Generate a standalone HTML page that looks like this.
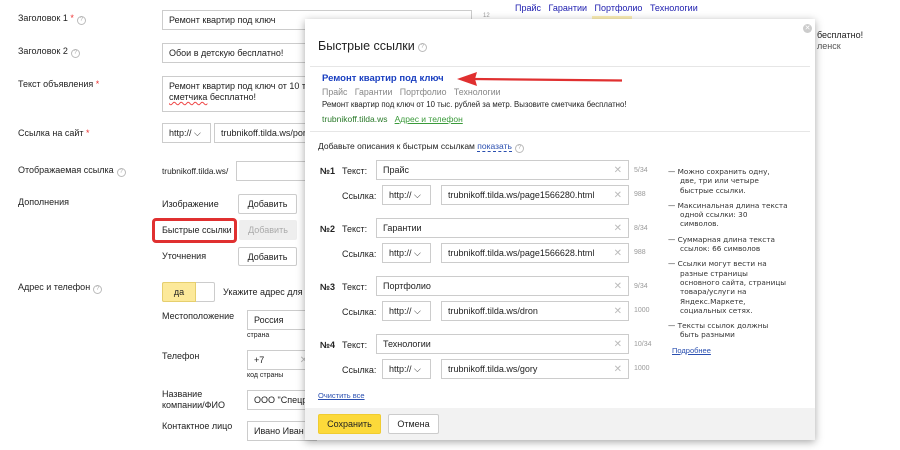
<!DOCTYPE html>
<html><head><meta charset="utf-8"><style>
*{box-sizing:border-box;margin:0;padding:0}
body{width:900px;height:450px;background:#fff;position:relative;overflow:hidden;font-family:"Liberation Sans",Arial,sans-serif;font-size:9px;color:#222}
.a{position:absolute;white-space:nowrap}
.inp{position:absolute;border:1px solid #ccc;background:#fff;font-size:9px;padding:0 0 0 6px;display:flex;align-items:center;white-space:nowrap;overflow:hidden}
.btn{position:absolute;border:1px solid #ccc;background:#fff;border-radius:2px;font-size:9px;display:flex;align-items:center;justify-content:center}
.q{display:inline-block;width:9px;height:9px;border:1px solid #bbb;border-radius:50%;font-size:6px;color:#aaa;text-align:center;line-height:7px;vertical-align:0px;margin-left:3px}
.req{color:#e33}
.x{position:absolute;right:6px;color:#bbb;font-size:10px}
.cnt{position:absolute;font-size:7px;color:#999}
.notes{position:absolute;left:668px;font-family:"DejaVu Sans",sans-serif;font-size:7.3px;line-height:9.3px;color:#333;white-space:nowrap}
.notes div{padding-left:12px;text-indent:-12px;margin-bottom:6px}
</style></head><body>
<div class="a" style="left:18px;top:13px">Заголовок 1 <span class="req">*</span><span class="q">?</span></div>
<div class="inp" style="left:162px;top:10px;width:310px;height:20px">Ремонт квартир под ключ<span class="x" style="right:10px">⌵</span></div>
<div class="a" style="left:483px;top:13px;font-size:6px;color:#999">12</div>
<div class="a" style="left:18px;top:46px">Заголовок 2<span class="q">?</span></div>
<div class="inp" style="left:162px;top:43px;width:150px;height:20px">Обои в детскую бесплатно!</div>
<div class="a" style="left:18px;top:79px">Текст объявления <span class="req">*</span></div>
<div class="inp" style="left:162px;top:76px;width:150px;height:36px;align-items:flex-start;padding-top:4px;line-height:11px;display:block">Ремонт квартир под ключ от 10 тыс.<br><span style="text-decoration:underline wavy #e44">сметчика</span> бесплатно!</div>
<div class="a" style="left:18px;top:128px">Ссылка на сайт <span class="req">*</span></div>
<div class="inp" style="left:162px;top:123px;width:49px;height:20px">http:// ⌵</div>
<div class="inp" style="left:214px;top:123px;width:100px;height:20px">trubnikoff.tilda.ws/portf</div>
<div class="a" style="left:18px;top:165px">Отображаемая ссылка<span class="q">?</span></div>
<div class="a" style="left:162px;top:166px;font-size:8.3px">trubnikoff.tilda.ws/</div>
<div class="inp" style="left:236px;top:161px;width:80px;height:20px"></div>
<div class="a" style="left:18px;top:197px">Дополнения</div>
<div class="a" style="left:162px;top:199px">Изображение</div>
<div class="btn" style="left:238px;top:194px;width:59px;height:20px">Добавить</div>
<div class="a" style="left:152px;top:218px;width:85px;height:25px;border:3px solid #e03030;border-radius:4px"></div>
<div class="a" style="left:162px;top:225px">Быстрые ссылки</div>
<div class="btn" style="left:239px;top:220px;width:58px;height:20px;background:#eee;border-color:#eee;color:#aaa">Добавить</div>
<div class="a" style="left:162px;top:251px">Уточнения</div>
<div class="btn" style="left:238px;top:247px;width:59px;height:19px">Добавить</div>
<div class="a" style="left:18px;top:282px">Адрес и телефон<span class="q">?</span></div>
<div class="a" style="left:162px;top:282px;width:53px;height:20px;border:1px solid #ccc;border-radius:2px;background:#fff"></div>
<div class="a" style="left:162px;top:282px;width:34px;height:20px;background:#fce99a;border:1px solid #e6cf6e;border-radius:2px 0 0 2px;text-align:center;line-height:18px">да</div>
<div class="a" style="left:223px;top:287px">Укажите адрес для</div>
<div class="a" style="left:162px;top:311px">Местоположение</div>
<div class="inp" style="left:247px;top:310px;width:70px;height:20px">Россия</div>
<div class="a" style="left:247px;top:332px;font-size:7px">страна</div>
<div class="a" style="left:162px;top:351px">Телефон</div>
<div class="inp" style="left:247px;top:350px;width:70px;height:20px">+7<span class="x" style="right:8px">✕</span></div>
<div class="a" style="left:247px;top:372px;font-size:7px">код страны</div>
<div class="a" style="left:162px;top:389px;line-height:11px">Название<br>компании/ФИО</div>
<div class="inp" style="left:247px;top:390px;width:70px;height:20px">ООО "Спецр</div>
<div class="a" style="left:162px;top:421px">Контактное лицо</div>
<div class="inp" style="left:247px;top:421px;width:70px;height:20px">Ивано Иван</div>
<div class="a" style="left:515px;top:3px;color:#2020b0;font-size:9px">Прайс &nbsp; Гарантии &nbsp; Портфолио &nbsp; Технологии</div>
<div class="a" style="left:592px;top:16px;width:40px;height:4px;background:#fbeeb5"></div>
<div class="a" style="left:817px;top:30px">бесплатно!</div>
<div class="a" style="left:817px;top:41px;color:#555">ленск</div>

<div class="a" style="left:305px;top:19px;width:510px;height:421px;background:#fff;box-shadow:0 2px 8px rgba(0,0,0,.35)">
  <div class="a" style="left:13px;top:20px;font-size:12.5px;color:#222">Быстрые ссылки<span class="q" style="vertical-align:2px">?</span></div>
  <div class="a" style="left:498px;top:5px;width:9px;height:9px;border-radius:50%;background:#ccc;color:#fff;font-size:7px;text-align:center;line-height:9px">✕</div>
  <div class="a" style="left:5px;top:47px;width:500px;border-top:1px solid #e6e6e6"></div>
  <div class="a" style="left:17px;top:54px;font-weight:bold;color:#1a3fc0;font-size:9.5px">Ремонт квартир под ключ</div>
  <div class="a" style="left:17px;top:68px;color:#888;font-size:8.8px">Прайс &nbsp; Гарантии &nbsp; Портфолио &nbsp; Технологии</div>
  <div class="a" style="left:17px;top:81px;font-size:7.8px">Ремонт квартир под ключ от 10 тыс. рублей за метр. Вызовите сметчика бесплатно!</div>
  <div class="a" style="left:17px;top:95px;color:#2a7a2a;font-size:8.5px">trubnikoff.tilda.ws &nbsp; <span style="text-decoration:underline;color:#3a9a3a">Адрес и телефон</span></div>
  <div class="a" style="left:5px;top:112px;width:500px;border-top:1px solid #e6e6e6"></div>
  <div class="a" style="left:13px;top:122px;font-size:8.5px">Добавьте описания к быстрым ссылкам <span style="color:#2a4fb0;border-bottom:1px dashed #2a4fb0">показать</span><span class="q">?</span></div>
</div>

<div class="a" style="left:320px;top:166px;font-weight:bold">№1</div><div class="a" style="left:342px;top:166px">Текст:</div>
<div class="inp" style="left:376px;top:160px;width:253px;height:20px">Прайс<span class="x">✕</span></div><div class="cnt" style="left:634px;top:167px">5/34</div>
<div class="a" style="left:342px;top:191px">Ссылка:</div>
<div class="inp" style="left:382px;top:185px;width:49px;height:20px">http:// ⌵</div>
<div class="inp" style="left:441px;top:185px;width:188px;height:20px">trubnikoff.tilda.ws/page1566280.html<span class="x">✕</span></div><div class="cnt" style="left:634px;top:191px">988</div>

<div class="a" style="left:320px;top:224px;font-weight:bold">№2</div><div class="a" style="left:342px;top:224px">Текст:</div>
<div class="inp" style="left:376px;top:218px;width:253px;height:20px">Гарантии<span class="x">✕</span></div><div class="cnt" style="left:634px;top:225px">8/34</div>
<div class="a" style="left:342px;top:249px">Ссылка:</div>
<div class="inp" style="left:382px;top:243px;width:49px;height:20px">http:// ⌵</div>
<div class="inp" style="left:441px;top:243px;width:188px;height:20px">trubnikoff.tilda.ws/page1566628.html<span class="x">✕</span></div><div class="cnt" style="left:634px;top:249px">988</div>

<div class="a" style="left:320px;top:282px;font-weight:bold">№3</div><div class="a" style="left:342px;top:282px">Текст:</div>
<div class="inp" style="left:376px;top:276px;width:253px;height:20px">Портфолио<span class="x">✕</span></div><div class="cnt" style="left:634px;top:283px">9/34</div>
<div class="a" style="left:342px;top:307px">Ссылка:</div>
<div class="inp" style="left:382px;top:301px;width:49px;height:20px">http:// ⌵</div>
<div class="inp" style="left:441px;top:301px;width:188px;height:20px">trubnikoff.tilda.ws/dron<span class="x">✕</span></div><div class="cnt" style="left:634px;top:307px">1000</div>

<div class="a" style="left:320px;top:340px;font-weight:bold">№4</div><div class="a" style="left:342px;top:340px">Текст:</div>
<div class="inp" style="left:376px;top:334px;width:253px;height:20px">Технологии<span class="x">✕</span></div><div class="cnt" style="left:634px;top:341px">10/34</div>
<div class="a" style="left:342px;top:365px">Ссылка:</div>
<div class="inp" style="left:382px;top:359px;width:49px;height:20px">http:// ⌵</div>
<div class="inp" style="left:441px;top:359px;width:188px;height:20px">trubnikoff.tilda.ws/gory<span class="x">✕</span></div><div class="cnt" style="left:634px;top:365px">1000</div>

<div class="a" style="left:318px;top:391px;font-size:7.5px;color:#2a4fb0;text-decoration:underline">Очистить все</div>
<div class="notes" style="top:167px">
<div>— Можно сохранить одну,<br>двe, три или четыре<br>быстрые ссылки.</div>
<div>— Максинальная длина текста<br>одной ссылки: 30<br>символов.</div>
<div>— Суммарная длина текста<br>ссылок: 66 символов</div>
<div>— Ссылки могут вести на<br>разные страницы<br>основного сайта, страницы<br>товара/услуги на<br>Яндекс.Маркете,<br>социальных сетях.</div>
<div>— Тексты ссылок должны<br>быть разными</div>
<div style="padding-left:16px;color:#2a4fb0;text-decoration:underline;font-family:'Liberation Sans',sans-serif;font-size:7.5px">Подробнее</div>
</div>
<div class="a" style="left:305px;top:408px;width:510px;height:32px;background:#f2f2f2"></div>
<div class="btn" style="left:318px;top:414px;width:63px;height:20px;background:#fcd93a;border-color:#f0cc30">Сохранить</div>
<div class="btn" style="left:388px;top:414px;width:51px;height:20px">Отмена</div>

<svg class="a" style="left:455px;top:70px" width="170" height="18" viewBox="0 0 170 18">
<line x1="18" y1="9" x2="167" y2="10.5" stroke="#e03030" stroke-width="2.2"/>
<polygon points="2,9 22,2 20,9 22,16" fill="#e03030"/>
</svg>
</body></html>
